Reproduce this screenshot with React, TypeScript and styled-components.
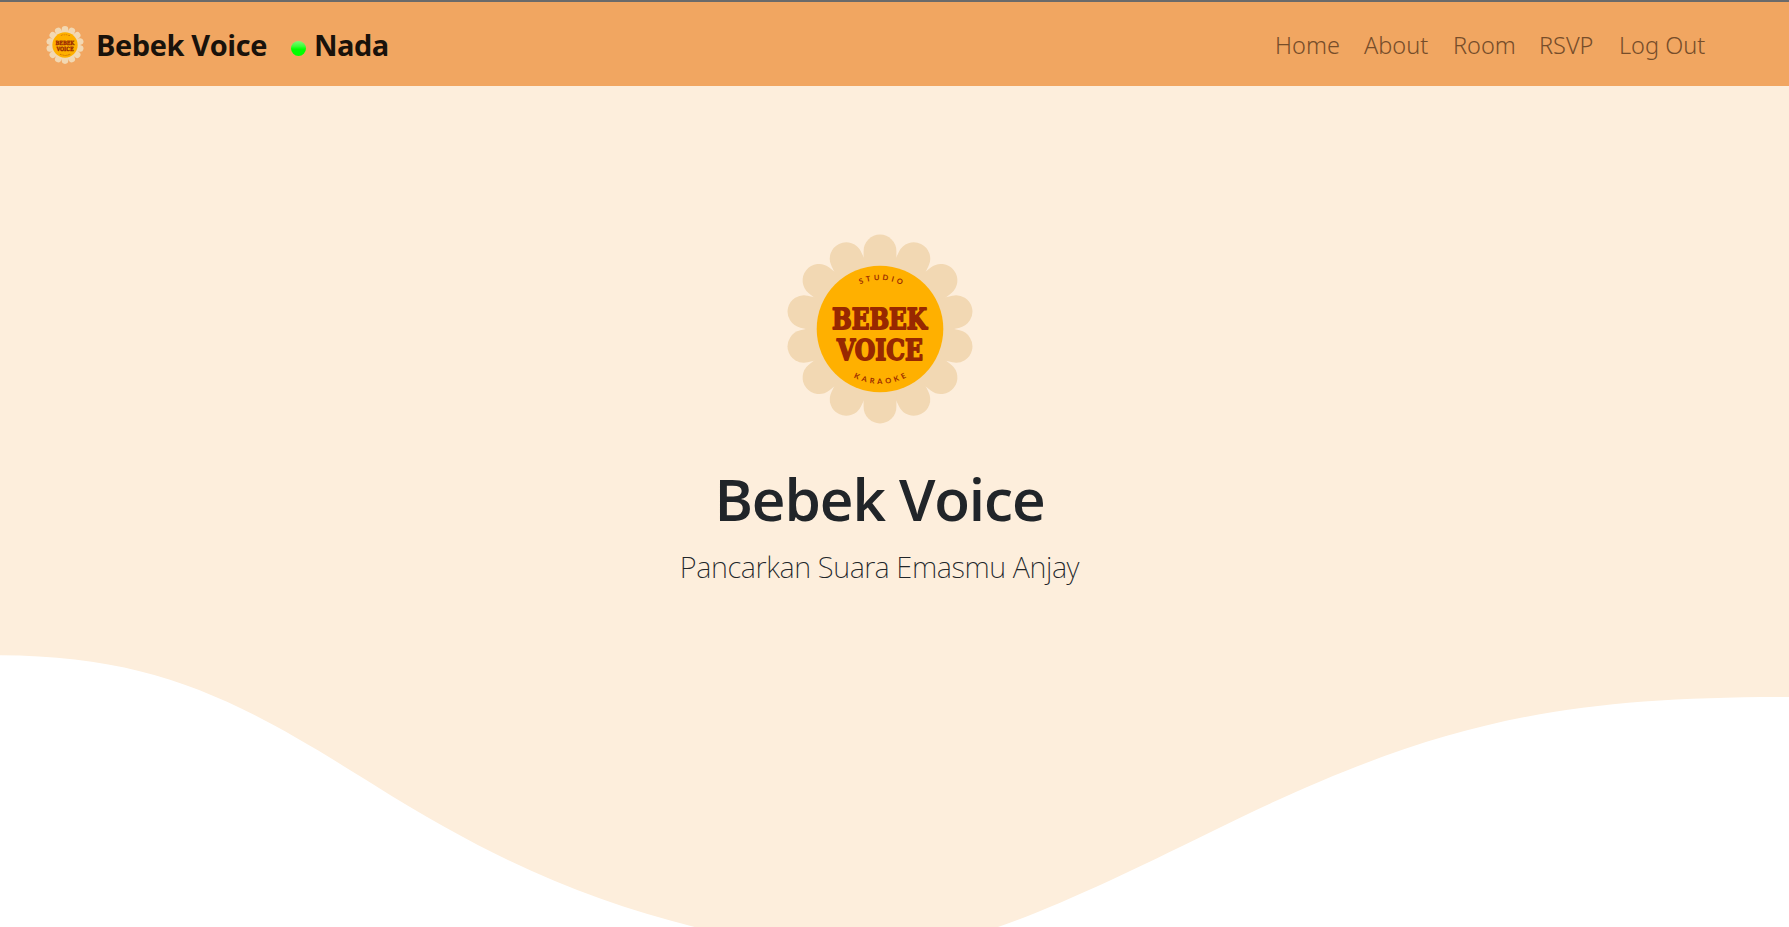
import React from "react";
import styled, { createGlobalStyle } from "styled-components";

const GlobalStyle = createGlobalStyle`
  * { box-sizing: border-box; }
  html, body { margin: 0; padding: 0; overflow: hidden; }
  body {
    background: #fff;
    color: #212529;
    font-family: "Open Sans", "Noto Sans", sans-serif;
  }
`;

const Page = styled.div`
  display: flex;
  flex-direction: column;
  height: 100vh;
`;

const Navbar = styled.header`
  display: flex;
  align-items: center;
  justify-content: space-between;
  height: 86px;
  flex-shrink: 0;
  border-top: 2px solid #6a6a6a;
  background: #f1a661;
  padding: 2px 83px 0 46px;
`;

const Brand = styled.div`
  display: flex;
  align-items: center;
  height: 38px;
`;

const BrandName = styled.span<{ $gap: number; $spacing: number }>`
  margin-left: ${(p) => p.$gap}px;
  font-size: 29px;
  font-weight: 700;
  line-height: 38px;
  letter-spacing: ${(p) => p.$spacing}px;
  color: #19120b;
  white-space: nowrap;
`;

const StatusDot = styled.span`
  width: 15px;
  height: 15px;
  margin: 6px 0 0 24px;
  border-radius: 50%;
  background: linear-gradient(#7dfb75 0%, #3dfc38 35%, #00ff00 55%);
`;

const Nav = styled.nav`
  display: flex;
  gap: 24px;
`;

const NavLink = styled.a<{ $width: number }>`
  width: ${(p) => p.$width}px;
  font-family: "Noto Sans", "Open Sans", sans-serif;
  font-size: 23.5px;
  font-weight: 300;
  line-height: 36px;
  color: #764d2a;
  text-decoration: none;
  white-space: nowrap;
`;

const Hero = styled.main`
  display: grid;
  flex: 1;
  background: #fdeedc;
  > * { grid-area: 1 / 1; }
`;

const Intro = styled.section`
  display: flex;
  flex-direction: column;
  align-items: center;
  width: 1759px;
  padding-top: 148px;
  z-index: 1;
`;

const Title = styled.h1`
  margin: 38px 0 0;
  font-size: 58.5px;
  font-weight: 600;
  line-height: 72px;
  letter-spacing: -1.1px;
  white-space: nowrap;
`;

const Tagline = styled.p`
  margin: 12px 0 0;
  font-family: "Noto Sans", "Open Sans", sans-serif;
  font-size: 29px;
  font-weight: 200;
  line-height: 42px;
  letter-spacing: -0.4px;
  white-space: nowrap;
`;

const Wave = styled.svg`
  display: block;
  align-self: end;
  width: 100%;
  height: 287px;
`;

const petals = Array.from({ length: 14 }, (_, i) => (i * 360) / 14);

function Logo({ size, id }: { size: number; id: string }) {
  return (
    <svg width={size} height={size} viewBox="-95 -95 190 190">
      <defs>
        <path id={id + "-top"} d="M-49 0A49 49 0 0 1 49 0" />
        <path id={id + "-bottom"} d="M-55 0A55 55 0 0 0 55 0" />
      </defs>
      {petals.map((angle) => (
        <line
          key={angle}
          y2={-78}
          transform={`rotate(${angle})`}
          stroke="#f2d8b3"
          strokeWidth={32.8}
          strokeLinecap="round"
        />
      ))}
      <circle r={63.3} fill="#ffb000" />
      <g fill="#982800" textAnchor="middle">
        <g fontFamily="Lato, sans-serif" fontSize={7.4} fontWeight={700}>
          <text letterSpacing={3}>
            <textPath href={`#${id}-top`} startOffset="51.5%">STUDIO</textPath>
          </text>
          <text letterSpacing={3.3}>
            <textPath href={`#${id}-bottom`} startOffset="51%">KARAOKE</textPath>
          </text>
        </g>
        <g
          fontFamily="DejaVu Serif, serif"
          fontSize={28.5}
          fontWeight={700}
          stroke="#982800"
          strokeWidth={1.8}
          strokeLinejoin="round"
        >
          <text x={-0.5} y={0.3} textLength={95} lengthAdjust="spacingAndGlyphs">BEBEK</text>
          <text y={31.3} textLength={86} lengthAdjust="spacingAndGlyphs">VOICE</text>
        </g>
      </g>
    </svg>
  );
}

const links = [
  { label: "Home", width: 65 },
  { label: "About", width: 65 },
  { label: "Room", width: 62 },
  { label: "RSVP", width: 56 },
  { label: "Log Out", width: 87 },
];

export default function App() {
  return (
    <Page>
      <GlobalStyle />
      <Navbar>
        <Brand>
          <Logo size={38} id="brand" />
          <BrandName $gap={12} $spacing={-0.4}>Bebek Voice</BrandName>
          <StatusDot />
          <BrandName $gap={8} $spacing={-0.5}>Nada</BrandName>
        </Brand>
        <Nav>
          {links.map((link) => (
            <NavLink key={link.label} $width={link.width}>{link.label}</NavLink>
          ))}
        </Nav>
      </Navbar>
      <Hero>
        <Wave viewBox="0 640 1789 287" preserveAspectRatio="none">
          <path
            fill="#fff"
            d="M0 655.3C160 656 243 703 373 784.3C493 860 585 899.5 694.6 927L0 927ZM998 927C1058 906.5 1136 868.6 1204.7 835C1435 720 1560 697 1789 697V927Z"
          />
        </Wave>
        <Intro>
          <Logo size={190} id="hero" />
          <Title>Bebek Voice</Title>
          <Tagline>Pancarkan Suara Emasmu Anjay</Tagline>
        </Intro>
      </Hero>
    </Page>
  );
}
